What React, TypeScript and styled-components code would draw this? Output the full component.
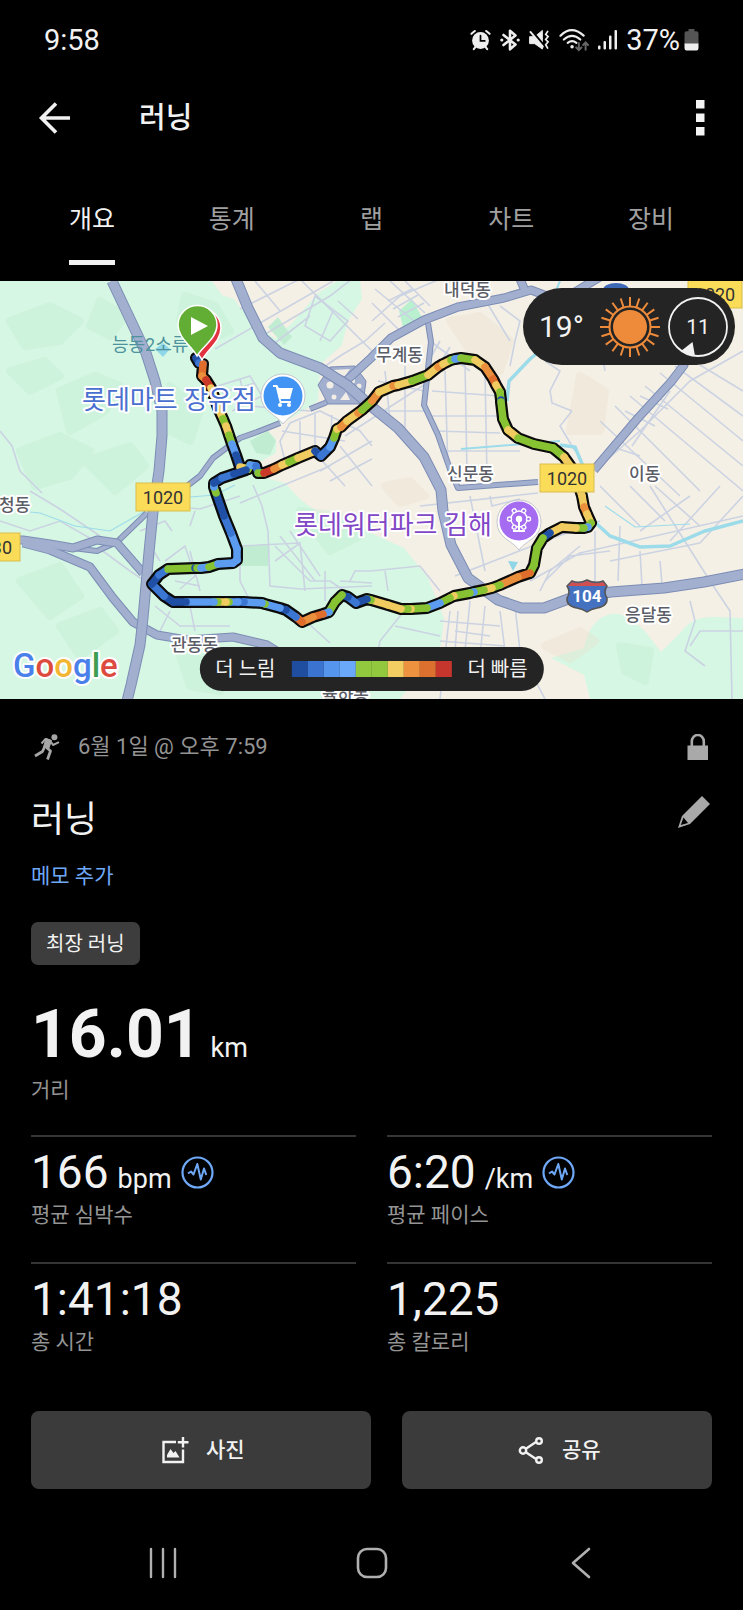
import React from "react";
import styled, { createGlobalStyle } from "styled-components";

const FONT = `Roboto, "Noto Sans CJK KR", sans-serif`;

const GlobalStyle = createGlobalStyle`
  * { box-sizing: border-box; }
  body { margin: 0; background: #000; color: #f2f2f2; font-family: ${FONT}; }
  button { font: inherit; color: inherit; background: none; border: 0; padding: 0; cursor: pointer; }
  svg { display: block; }
`;

const Screen = styled.div`
  display: flex;
  flex-direction: column;
  min-height: 100vh;
`;

/* ---------- top bars ---------- */

const StatusBar = styled.header`
  display: flex;
  align-items: center;
  justify-content: space-between;
  height: 80px;
  padding: 0 44px;
  font-size: 29px;
  line-height: 32px;
`;

const StatusIcons = styled.div`
  display: flex;
  align-items: center;
  gap: 9px;
`;

const BatteryGroup = styled.div`
  display: flex;
  align-items: center;
  gap: 4px;
`;

const AppBar = styled.div`
  display: flex;
  align-items: center;
  height: 76px;
  padding: 0 38px;
`;

const AppTitle = styled.h1`
  flex: 1;
  margin: 0 0 0 67px;
  font-size: 29px;
  line-height: 36px;
  font-weight: 500;
`;

const TabBar = styled.nav`
  display: grid;
  grid-template-columns: repeat(5, 1fr);
  height: 125px;
  padding: 0 22px 16px;
`;

const Tab = styled.button<{ $active?: boolean }>`
  justify-self: center;
  display: flex;
  align-items: flex-end;
  padding-bottom: 24px;
  border-bottom: 5px solid ${(p) => (p.$active ? "#f2f2f2" : "transparent")};
  color: ${(p) => (p.$active ? "#f2f2f2" : "#a0a0a0")};
  font-size: 25px;
  line-height: 32px;
`;

/* ---------- map ---------- */

const MapPanel = styled.section`
  position: relative;
  overflow: hidden;

  > svg {
    width: 100%;
    height: auto;
  }
`;

const WeatherPill = styled.div`
  position: absolute;
  top: 7px;
  right: 8px;
  display: flex;
  align-items: center;
  height: 77px;
  padding: 0 7px 0 16px;
  gap: 8px;
  border-radius: 39px;
  background: #242424;
`;

const Temperature = styled.span`
  width: 53px;
  font-size: 30px;
  line-height: 36px;
`;

const Legend = styled.div`
  position: absolute;
  bottom: 8px;
  left: 50%;
  transform: translateX(-50%);
  display: flex;
  align-items: center;
  gap: 16px;
  height: 44px;
  padding: 0 16px;
  border-radius: 22px;
  background: #242424;
  font-size: 20px;
  line-height: 28px;
  white-space: nowrap;
`;

const Scale = styled.div`
  display: flex;
`;

const Swatch = styled.span<{ $color: string }>`
  width: 16px;
  height: 16px;
  background: ${(p) => p.$color};
`;

/* ---------- activity details ---------- */

const Details = styled.main`
  display: flex;
  flex-direction: column;
  align-items: stretch;
  padding: 32px 31px 0;
`;

const MetaRow = styled.div`
  display: flex;
  align-items: center;
  height: 32px;
  color: #949494;
  font-size: 22px;
  line-height: 32px;
`;

const MetaText = styled.span`
  flex: 1;
  margin-left: 15px;
`;

const TitleRow = styled.div`
  display: flex;
  align-items: flex-start;
  justify-content: space-between;
  margin-top: 33px;
`;

const ActivityTitle = styled.h2`
  margin: 0;
  font-size: 36px;
  line-height: 48px;
  font-weight: 400;
`;

const EditButton = styled.button`
  height: 32px;
  margin-right: 2px;
  color: #a9a9a9;
`;

const NoteLink = styled.a`
  align-self: flex-start;
  margin-top: 18px;
  color: #6ea8f7;
  font-size: 21px;
  line-height: 28px;
  text-decoration: none;
`;

const Badge = styled.span`
  align-self: flex-start;
  margin-top: 32px;
  padding: 8px 15px 7px;
  border-radius: 7px;
  background: #3d3d3d;
  font-size: 20px;
  line-height: 28px;
`;

const Primary = styled.div`
  margin: 34px 0 31px;
`;

const PrimaryValue = styled.div`
  display: flex;
  align-items: baseline;
  gap: 9px;
  font-size: 66px;
  line-height: 72px;
  font-weight: 700;
`;

const Unit = styled.span`
  font-size: 27px;
  line-height: 32px;
  font-weight: 400;
`;

const Label = styled.div<{ $gap?: number }>`
  margin-top: ${(p) => p.$gap ?? 1}px;
  color: #949494;
  font-size: 21px;
  line-height: 28px;
`;

const StatGrid = styled.div`
  display: grid;
  grid-template-columns: 1fr 1fr;
  gap: 33px 31px;
`;

const Stat = styled.div`
  border-top: 2px solid #353535;
  padding-top: 7px;
`;

const StatLine = styled.div`
  display: flex;
  align-items: center;
  gap: 9px;
`;

const StatValue = styled.div`
  display: flex;
  align-items: baseline;
  gap: 9px;
  font-size: 46px;
  line-height: 56px;
`;

const Actions = styled.div`
  display: grid;
  grid-template-columns: 11fr 10fr;
  gap: 31px;
  margin-top: 55px;
`;

const ActionButton = styled.button`
  display: flex;
  align-items: center;
  justify-content: center;
  gap: 17px;
  height: 78px;
  padding-left: 4px;
  border-radius: 8px;
  background: #3b3b3b;
  font-size: 21px;
  line-height: 28px;
  font-weight: 500;
`;

const NavBar = styled.nav`
  display: grid;
  grid-template-columns: repeat(3, 1fr);
  justify-items: center;
  align-items: center;
  height: 64px;
  margin: 42px 58px 15px;
  color: #b0b0b0;
`;

/* ---------- icons ---------- */

const AlarmIcon = () => (
  <svg width="21" height="22" viewBox="0 0 22 22" fill="none" stroke="#eee" strokeWidth="2.2" strokeLinecap="round">
    <circle cx="11" cy="11.5" r="8.8" fill="#eee" stroke="none" />
    <path d="M1.5 4.5 5 1.6M20.500 4.500 17 1.600M4 20.500 6 18M18 20.500 16 18" />
    <path d="M11 6.500V12H15.500" stroke="#000" strokeWidth="1.800" />
  </svg>
);

const BluetoothIcon = () => (
  <svg width="20" height="22" viewBox="0 0 20 22" fill="none" stroke="#eee" strokeWidth="2.600" strokeLinejoin="round" strokeLinecap="round">
    <path d="M3.500 6 15.500 15.500 10 20.300V1.700L15.500 6.500 3.500 16" />
    <circle cx="1.800" cy="11" r="1.600" fill="#eee" stroke="none" />
    <circle cx="18.200" cy="11" r="1.600" fill="#eee" stroke="none" />
  </svg>
);

const MuteIcon = () => (
  <svg width="21" height="22" viewBox="0 0 22 22" fill="none" stroke="#eee" strokeLinecap="round">
    <path d="M1 7.500H6L14 1V20.500L6 14.800H1Z" fill="#eee" stroke="#eee" strokeWidth="1" />
    <path d="M3.500 2 15 16" stroke="#000" strokeWidth="2.500" />
    <path d="M1.500 2.500 14.500 18" strokeWidth="2" />
    <path d="M19.500 2l-2 3 2.500 2.500-2.500 3 2.500 2.500-2.500 3 2 3.500" strokeWidth="1.800" />
  </svg>
);

const WifiIcon = () => (
  <svg width="30" height="24" viewBox="0 0 31 24" fill="none" stroke="#eee" strokeWidth="2.2" strokeLinecap="round">
    <path d="M1.500 7.500Q13 -4 25.500 7.500M5 11.500Q13.500 4 22 11.500M9 15Q13.500 11.500 18 15" />
    <circle cx="13.500" cy="19" r="1.800" fill="#eee" stroke="none" />
    <path d="M20.500 15v7.500m-2.700-2.700 2.700 2.700 2.700-2.700M27.500 22V14.500m-2.500 2.700 2.500-2.700 2.500 2.700" stroke="#666" strokeWidth="2" />
  </svg>
);

const SignalIcon = () => (
  <svg width="19" height="22" viewBox="0 0 19 22" fill="#eee">
    <rect x="0" y="16.500" width="2.500" height="4" rx="1" />
    <rect x="5.500" y="12" width="2.500" height="8.500" rx="1" />
    <rect x="11" y="6.500" width="2.500" height="14" rx="1" />
    <rect x="16.500" y="1" width="2.500" height="19.500" rx="1" />
  </svg>
);

const BatteryIcon = () => (
  <svg width="15" height="22" viewBox="0 0 15 22">
    <path d="M4.500 0H10.500V2.200H12.500Q14.500 2.200 14.500 4.500V15H.5V4.500Q.5 2.200 2.500 2.200H4.500Z" fill="#555" />
    <path d="M.5 14.500H14.500V19Q14.500 21.500 12.500 21.500H2.500Q.5 21.500 .5 19Z" fill="#eee" />
  </svg>
);

const BackIcon = () => (
  <svg width="34" height="34" viewBox="0 0 34 34" fill="none" stroke="#f2f2f2" strokeWidth="3.600">
    <path d="M32 17H4M18 2.500 3.500 17 18 31.500" />
  </svg>
);

const MoreIcon = () => (
  <svg width="9" height="36" viewBox="0 0 9 36" fill="#f4f4f4">
    <rect width="8.500" height="8.500" />
    <rect y="13.500" width="8.500" height="8.500" />
    <rect y="27" width="8.500" height="8.500" />
  </svg>
);

const RunnerIcon = () => (
  <svg width="32" height="28" viewBox="0 0 32 28" fill="none" stroke="#a6a6a6" strokeLinejoin="round">
    <circle cx="23.400" cy="4.200" r="3" fill="#a6a6a6" stroke="none" />
    <path d="M15 5.500 20.500 7.500 18 15 12.500 14Z" fill="#a6a6a6" strokeWidth="1" />
    <path d="M10.500 10.500 14.500 6 19 7.500 22 12 28 9.200" strokeWidth="2" />
    <path d="M13.800 13.500 11.500 18.500 4 23M15.500 14.500 19.500 18 16.500 26.500" strokeWidth="2.800" />
  </svg>
);

const LockIcon = () => (
  <svg width="29" height="26" viewBox="0 0 29 26" fill="none">
    <path d="M8.800 13V7.500a6 6.500 0 0 1 12 0V13" stroke="#a9a9a9" strokeWidth="2.600" />
    <rect x="4.500" y="11.500" width="20.500" height="14.500" fill="#a9a9a9" />
  </svg>
);

const PencilIcon = () => (
  <svg width="32" height="32" viewBox="0 0 32 32" fill="currentColor">
    <path fillRule="evenodd" d="M24 0 32 8 12 28 0 32 4 20ZM5.500 21.500 2.800 29 10 27Z" />
  </svg>
);

const PulseIcon = () => (
  <svg width="33" height="33" viewBox="0 0 33 33" fill="none" stroke="#6ea8f7">
    <circle cx="16.500" cy="16.500" r="15" strokeWidth="2.200" />
    <path d="M7 17.500 10 15.500 12.500 18.500 16.300 8 19.800 23.500 23 12.500 25.300 19" strokeWidth="2" strokeLinejoin="round" />
  </svg>
);

const PhotoIcon = () => (
  <svg width="27" height="27" viewBox="0 0 27 27" fill="none" stroke="#f2f2f2" strokeWidth="2.400">
    <path d="M14 5H1.500V25H21V12.500" />
    <path d="M21 0V10.500M15.800 5.200H26.500" />
    <path d="M5 20.500V18L8.500 12 11.500 16 13.500 14 17.500 20.500Z" fill="#f2f2f2" stroke="none" />
  </svg>
);

const ShareIcon = () => (
  <svg width="27" height="27" viewBox="0 0 27 27" fill="none" stroke="#f2f2f2" strokeWidth="2.400">
    <path d="M7.500 12 18 5M7.500 15 18 22" />
    <circle cx="5" cy="13.500" r="3.200" />
    <circle cx="21" cy="4" r="2.800" />
    <circle cx="21" cy="23" r="2.800" />
  </svg>
);

const SunIcon = () => (
  <svg width="60" height="60" viewBox="-30 -30 60 60" stroke="#ee8b3b" strokeWidth="2">
    {Array.from({ length: 20 }, (_, i) => (
      <line key={i} x1="0" y1="-20" x2="0" y2="-30" transform={`rotate(${i * 18})`} />
    ))}
    <circle r="20.500" fill="none" />
    <circle r="17" fill="#ee8b3b" stroke="none" />
  </svg>
);

const WindIcon = () => (
  <svg width="60" height="60" viewBox="-30 -30 60 60">
    <circle r="29" fill="none" stroke="#f2f2f2" strokeWidth="1.800" />
    <path d="M-5.500 15 -17 24Q-10 29 -3 29Z" fill="#f2f2f2" />
    <text y="7" fontSize="21" textAnchor="middle" fill="#f2f2f2">11</text>
  </svg>
);

/* ---------- map drawing ---------- */

const DB = "#1f50a5";
const MB = "#3a76d2";
const LB = "#5b9bf0";
const G = "#86c232";
const Y = "#f0cc60";
const O = "#ea8f3c";
const D = "#df6d2c";
const R = "#cb3a28";

/* Each entry is a track point and the pace colour of the stretch that leaves it. */
const track: [number, number, string][] = [
  [196, 77, DB], [199, 82, MB], [203, 83, D], [202, 95, O], [206, 99, R], [211, 107, Y],
  [218, 127, Y], [223, 138, G], [226, 145, Y], [229, 154, G], [232, 163, LB], [236, 174, DB],
  [240, 186, Y], [248, 188, G], [250, 184, LB], [256, 185, MB], [258, 192, G], [264, 192, R],
  [274, 188, O], [282, 184, Y], [289, 181, G], [298, 177, Y], [315, 170, DB], [321, 175, MB],
  [330, 166, LB], [334, 157, G], [337, 148, Y], [341, 146, O], [347, 140, Y], [358, 132, O],
  [362, 129, G], [372, 120, O], [379, 111, Y], [393, 105, O], [398, 104, Y], [412, 100, G],
  [428, 94, Y], [438, 86, O], [443, 83, Y], [451, 79, G], [455, 78, LB], [461, 77, G],
  [475, 79, Y], [485, 86, O], [493, 98, D], [496, 104, Y], [500, 111, G], [501, 119, DB],
  [501, 121, G], [503, 138, G], [508, 149, Y], [518, 157, G], [534, 163, G], [553, 167, G],
  [564, 176, Y], [574, 190, Y], [582, 215, Y], [584, 226, O], [587, 233, Y], [591, 242, G],
  [588, 246, LB], [584, 247, G], [576, 247, Y], [562, 246, Y], [550, 252, DB], [543, 257, G],
  [537, 267, G], [534, 284, G], [530, 292, D], [518, 296, O], [500, 304, G], [492, 307, Y],
  [484, 309, G], [474, 311, LB], [470, 312, G], [454, 315, Y], [450, 317, G], [440, 322, LB],
  [427, 327, G], [411, 328, Y], [408, 328, G], [401, 328, Y], [388, 324, Y], [371, 319, G],
  [367, 318, DB], [356, 322, MB], [348, 316, DB], [342, 314, G], [335, 321, G], [329, 331, LB],
  [323, 333, D], [313, 336, O], [302, 341, D], [296, 336, MB], [286, 329, DB], [280, 327, LB],
  [265, 323, G], [262, 322, LB], [244, 321, MB], [238, 321, LB], [229, 321, G], [226, 321, Y],
  [218, 321, G], [214, 321, LB], [186, 321, DB], [173, 321, DB], [164, 315, MB], [152, 303, DB],
  [159, 294, MB], [168, 288, G], [195, 287, DB], [197, 287, G], [201, 287, LB], [209, 286, G],
  [218, 283, LB], [233, 282, LB], [237, 279, LB], [237, 268, LB], [231, 252, MB], [224, 235, DB],
  [216, 212, G], [214, 206, LB], [214, 202, DB], [222, 197, MB], [234, 193, DB], [246, 189, DB],
];

const trackLine = track.map(([x, y]) => `${x},${y}`).join(" ");

const majorRoads = [
  "M112 0 130 38 146 72 155 100 162 130 162 155 159 190 153 231 149 271 143 337 140 364 131 404 127 420",
  "M236 -2 248 27 263 57 280 72 320 87 347 104 372 126 398 147 424 176 441 209 443 230 451 264 468 297 498 319 521 327 544 327 571 317 611 311 664 307 704 301 745 293",
];

const mediumRoads = [
  "M345 101 371 77 391 57 424 39 458 26 504 17 531 9 560 20 600 -4",
  "M-2 259 23 259 50 263 73 267 97 259 117 262 143 292",
  "M23 262 50 269 90 286 113 317 133 341 157 354 187 359 233 356 267 364 280 372",
  "M520 -2 526 12",
  "M594 189 638 137 671 101 684 84 684 60",
];

const smallRoads = [
  "M343 107 325 122 310 128M280 142 257 151 240 157 225 168 213 177 200 195 187 205",
  "M147 232 117 261 97 270 73 267",
  "M428 42 431 61 424 124 438 154 451 191 458 207 538 201",
];

const streets = [
  "M333 0 215 68M318 90 340 75 365 60 385 42M262 55 330 15 352 -2M300 -2 372 70M275 62 310 35",
  "M315 15 348 40 330 60 305 45ZM333 30 320 60M338 20 358 38M240 28 300 -2M280 30 255 0",
  "M372 40 400 15 440 -2M375 8 420 45M390 0 425 32M372 22 400 50M405 0 430 25",
  "M388 20 412 8M393 28 418 14M398 36 424 22M430 60 470 90M440 60 426 85M450 66 432 95",
  "M218 105 250 95 262 115 232 130M222 112 255 102M240 98 246 122M250 125 310 130",
  "M285 180 280 160 290 142 320 130 360 150 372 165M300 175 300 140M315 170 315 133M330 165 332 134M282 150 345 160",
  "M320 190 372 160M330 200 372 178M340 165 372 205M345 155 430 100M315 172 345 205",
  "M378 100 424 110M380 130 424 130M385 90 390 140M405 85 405 150M432 110 500 115M430 135 502 135M445 90 448 190M465 80 467 195M485 90 487 195",
  "M435 150 500 152M440 170 520 170M500 25 520 40 515 60 510 85M480 10 510 60M545 70 600 60 605 90",
  "M545 80 560 90 550 110 552 122 572 130M572 130 560 145 575 170M600 185 640 150 690 100 743 70",
  "M600 140 680 215M615 125 700 210M630 115 743 210M645 105 743 185M660 92 743 160M675 85 743 135M700 84 743 110",
  "M610 165 640 175M620 155 655 120M632 165 670 110M625 130 655 145M640 115 668 128",
  "M600 205 640 245M630 205 665 240M655 205 700 245M690 215 640 250M720 205 670 260M743 215 700 262",
  "M420 225 538 212M455 295 545 260 600 240M530 300 580 272 743 235M545 300 570 275 610 270M540 310 550 290 580 265",
  "M650 205 710 300 730 330 732 418M690 320 695 340 685 370 705 385M743 350 700 350 690 365",
  "M470 215 485 290M490 215 492 225 520 218M595 250 595 310M620 245 618 300M640 270 642 305M660 280 662 303M610 280 700 262",
  "M515 325 520 370 545 418M450 330 440 418M470 320 462 400M485 325 480 375M500 330 505 370M440 340 500 345M440 360 505 365",
  "M455 350 490 355M452 370 490 375M458 330 455 370M404 330 380 360 372 400M371 290 420 285 440 310M385 290 388 310",
  "M380 370 440 380M395 345 440 355M240 222 330 185M253 204 262 225 268 250 270 305 300 308 372 305",
  "M240 265 300 262M250 320 240 300 240 270M275 265 310 300M280 255 315 300M290 250 320 295M275 280 300 262 305 310",
  "M300 335 330 362M345 310 330 300 310 300M350 300 355 290 371 290M325 320 325 290M340 300 372 302",
  "M150 205 170 225 200 228 240 215M190 245 195 230M165 280 185 265 195 295 180 308M175 300 200 305M190 270 200 310",
  "M0 240 30 250 60 240 95 260M30 210 60 228 100 255M0 150 12 165 20 190 42 212",
  "M100 268 130 290 145 300M150 265 160 280M140 250 165 240 172 250M155 325 180 345 230 345M170 330 160 350M190 325 195 350",
];

const hills = [
  "M10 40 50 25 80 40 60 60 25 65Z",
  "M60 110 95 95 120 105 105 130 70 150Z",
  "M20 170 60 155 90 170 70 195 35 205Z",
  "M100 20 125 35 110 55 90 45Z",
  "M85 180 130 165 145 185 115 210Z",
  "M185 15 215 25 230 50 205 60 180 40Z",
  "M20 300 60 285 80 315 50 335Z",
  "M60 345 100 330 115 350 80 375Z",
  "M170 105 200 130 190 160 170 150Z",
  "M180 375 230 385 220 410 190 405Z",
  "M300 230 340 235 360 255 330 270Z",
  "M620 365 650 370 645 400 625 390Z",
  "M10 90 45 80 60 95 30 110Z",
];

const places: [string, number, number][] = [
  ["내덕동", 444, 15],
  ["무계동", 376, 80],
  ["신문동", 447, 199],
  ["이동", 629, 199],
  ["응달동", 625, 340],
  ["관동동", 171, 370],
  ["청동", -1, 230],
  ["율하동", 322, 420],
];

const shields: [string, number, number][] = [
  ["1020", 136, 202],
  ["1020", 540, 183],
  ["1020", 688, -1],
  ["30", -34, 252],
];

const Halo = styled.text<{ $size: number; $fill: string; $weight?: number }>`
  font-size: ${(p) => p.$size}px;
  font-weight: ${(p) => p.$weight ?? 500};
  fill: ${(p) => p.$fill};
  stroke: #fff;
  stroke-width: 4px;
  stroke-linejoin: round;
  paint-order: stroke;
`;

const Roads = ({ paths, width }: { paths: string[]; width: number }) => (
  <g fill="none" strokeLinejoin="round">
    {paths.map((d) => <path key={d} d={d} stroke="#7c8db5" strokeWidth={width} />)}
    {paths.map((d) => <path key={d + "i"} d={d} stroke="#a2afcf" strokeWidth={width - 2} />)}
  </g>
);

const RouteMap = () => (
  <svg viewBox="0 0 743 418" role="img" aria-label="러닝 경로 지도">
    <rect width="743" height="418" fill="#f5f0e5" />
    <g fill="#d6f7e3">
      <path d="M0 0H212L222 14 234 18 240 26 255 40 275 58 292 42 318 12 340 -2H360L362 18 348 40 342 64 320 84 318 120 300 132 282 142 268 150 276 158 276 172 262 180 250 182 262 196 285 202 300 218 318 232 345 238 371 252 404 267 428 297 444 337 441 364 420 390 400 418H0Z" />
      <path d="M399 30 412 18 424 40 404 50Z" fill="#b9f0cf" />
      <path d="M551 377 584 367 Q590 338 610 333 628 330 648 354L661 371 681 351Q692 335 715 336L743 337V418H590L584 394Z" />
    </g>
    <g fill="#bdebd0" opacity="0.300" stroke="#bdebd0" strokeWidth="8" strokeLinejoin="round">
      {hills.map((d) => <path key={d} d={d} />)}
    </g>
    <g fill="#c0ecd1">
      <path d="M240 264H268V285H240ZM268 46 278 36 292 56 284 64ZM250 160 268 150 276 160 270 174 256 172Z" />
    </g>
    <g fill="#eadfce" opacity="0.350" stroke="#eadfce" strokeWidth="8" strokeLinejoin="round">
      <path d="M450 40 480 35 510 60 500 90 470 70Z" />
      <path d="M580 95 605 110 600 150 570 150Z" />
      <path d="M545 365 580 350 595 360 570 378Z" />
      <path d="M385 205 410 200 425 215 400 222Z" />
    </g>
    <g fill="none" stroke="#cbd3e3" strokeWidth="1.600">
      {streets.map((d) => <path key={d} d={d} />)}
    </g>
    <g fill="none" stroke="#9cdcea" strokeWidth="3.500">
      <path d="M552 60 530 78 509 100 507 120" />
      <path d="M560 164 575 166 583 185 588 235 610 255 640 266 670 265 705 250 743 240" />
      <path d="M461 168 560 160M560 0 555 12" strokeWidth="2" />
      <path d="M0 228 40 232 75 245 110 250 145 230M190 216 215 214 235 204M605 225 635 246 690 243" strokeWidth="1.200" />
    </g>
    <path d="M508 280 518 281 513 290Z" fill="#8fd6e8" />
    <path d="M155 68 163 62 170 68 163 76Z" fill="#8fd6e8" />
    <Roads paths={smallRoads} width={6} />
    <path d="M330 86 355 85 366 100 363 123 328 123 318 104Z" fill="#a2afcf" stroke="#7c8db5" />
    <g fill="#f2eee6">
      <circle cx="330" cy="104" r="3.500" />
      <circle cx="334" cy="116" r="2.500" />
      <circle cx="352" cy="100" r="3" />
      <circle cx="359" cy="105" r="2.500" />
      <path d="M333 89 350 88 345 95 340 94ZM340 119 346 111 350 119Z" />
    </g>
    <Roads paths={mediumRoads} width={9} />
    <Roads paths={majorRoads} width={11} />

    <polyline points={trackLine} fill="none" stroke="#0b0b0b" strokeWidth="12" strokeLinejoin="round" strokeLinecap="round" />
    {track.slice(0, -1).map(([x, y, color], i) => (
      <line key={i} x1={x} y1={y} x2={track[i + 1][0]} y2={track[i + 1][1]} stroke={color} strokeWidth="7.500" strokeLinecap="round" />
    ))}

    {places.map(([name, x, y]) => (
      <Halo key={name} x={x} y={y} $size={17} $fill="#5b5d66">{name}</Halo>
    ))}
    <text x="112" y="70" fontSize="18" fill="#4d929c">능동2소류</text>
    <Halo x="82" y="128" $size={26} $fill="#4a70cf" $weight={400}>롯데마트 장유점</Halo>
    <Halo x="294" y="253" $size={26} $fill="#8247c6" $weight={400}>롯데워터파크 김해</Halo>

    <g stroke="#fff" strokeWidth="1.500">
      <path d="M202 79C197 69 183 60 183 47A19 19 0 0 1 221 47C221 60 208 68 202 79Z" fill="#e0333f" />
      <path d="M197 75C192 65 178 57 178 44A19.500 19.500 0 0 1 217 44C217 57 203 65 197 75Z" fill="#62ad33" />
    </g>
    <path d="M191 36 208 45 191 54Z" fill="#fff" />

    <g fill="#fff" stroke="#b9b9c4" strokeWidth="0.800">
      <path d="M283 143C277 134 261 130 261 115A22 22 0 0 1 305 115C305 130 289 134 283 143Z" />
      <path d="M519 269C513 260 497 257 497 241A22 22 0 0 1 541 241C541 257 525 260 519 269Z" />
    </g>
    <circle cx="283" cy="115" r="19.500" fill="#4194f4" />
    <path d="M273 104H277L279 107H293L290 118H279L277 105" fill="#fff" />
    <path d="M273 105H276.500L280.500 121H291" fill="none" stroke="#fff" strokeWidth="1.800" />
    <circle cx="280" cy="124" r="2" fill="#fff" />
    <circle cx="289" cy="124" r="2" fill="#fff" />
    <circle cx="519" cy="240" r="19.500" fill="#a56bf0" />
    <g fill="none" stroke="#fff" strokeWidth="1.400">
      <circle cx="519" cy="238" r="8" />
      <circle cx="519" cy="238" r="2.500" fill="#fff" />
      <path d="M519 238V250M513 250H525" strokeWidth="2" />
      {[0, 60, 120, 180, 240, 300].map((a) => (
        <circle key={a} cx="528.500" cy="238" r="2" fill="#a56bf0" transform={`rotate(${a} 519 238)`} />
      ))}
    </g>

    {shields.map(([name, x, y]) => (
      <g key={`${name}${x}`}>
        <rect x={x} y={y} width="54" height="28" fill="#fadc58" stroke="#d9bd4c" />
        <text x={name === "30" ? 12 : x + 27} y={y + 21} fontSize="18" textAnchor={name === "30" ? "end" : "middle"} fill="#333">{name}</text>
      </g>
    ))}
    <ellipse cx="616" cy="9" rx="13" ry="7" fill="#3c67b5" />
    <path d="M572 300Q579 303 587 299 595 303 603 300L607 305Q603 311 607 317 608 325 597 327 591 328 587 331 583 328 577 327 566 325 567 317 571 311 567 305Z" fill="#4472c0" stroke="#555" strokeWidth="1.500" />
    <path d="M572 301Q579 304 587 300 595 304 603 301L606 305H568Z" fill="#d05050" />
    <text x="587" y="321" fontSize="17" fontWeight="700" textAnchor="middle" fill="#fff">104</text>

    <Halo x="13" y="396" $size={33} $fill="#4a80ea">
      G<tspan fill="#dd4b3e">o</tspan><tspan fill="#f2b632">o</tspan><tspan fill="#4a80ea">g</tspan><tspan fill="#3f9d50">l</tspan><tspan fill="#dd4b3e">e</tspan>
    </Halo>
  </svg>
);

/* ---------- screen ---------- */

const tabs = ["개요", "통계", "랩", "차트", "장비"];

const paceColors = ["#1f4ea1", "#3a73d0", "#5595ed", "#6aa8fa", "#92c83e", "#92c83e", "#f3cd62", "#ed923f", "#dc712f", "#c6362c"];

const stats = [
  { value: "166", unit: "bpm", label: "평균 심박수" },
  { value: "6:20", unit: "/km", label: "평균 페이스" },
  { value: "1:41:18", label: "총 시간" },
  { value: "1,225", label: "총 칼로리" },
];

export default function App() {
  return (
    <Screen>
      <GlobalStyle />
      <StatusBar>
        <span>9:58</span>
        <StatusIcons>
          <AlarmIcon />
          <BluetoothIcon />
          <MuteIcon />
          <WifiIcon />
          <SignalIcon />
          <BatteryGroup>
            37%
            <BatteryIcon />
          </BatteryGroup>
        </StatusIcons>
      </StatusBar>
      <AppBar>
        <button type="button" aria-label="뒤로"><BackIcon /></button>
        <AppTitle>러닝</AppTitle>
        <button type="button" aria-label="더보기"><MoreIcon /></button>
      </AppBar>
      <TabBar>
        {tabs.map((tab, i) => (
          <Tab key={tab} type="button" $active={i === 0}>{tab}</Tab>
        ))}
      </TabBar>

      <MapPanel>
        <RouteMap />
        <WeatherPill>
          <Temperature>19°</Temperature>
          <SunIcon />
          <WindIcon />
        </WeatherPill>
        <Legend>
          <span>더 느림</span>
          <Scale>
            {paceColors.map((color, i) => <Swatch key={i} $color={color} />)}
          </Scale>
          <span>더 빠름</span>
        </Legend>
      </MapPanel>

      <Details>
        <MetaRow>
          <RunnerIcon />
          <MetaText>6월 1일 @ 오후 7:59</MetaText>
          <LockIcon />
        </MetaRow>
        <TitleRow>
          <ActivityTitle>러닝</ActivityTitle>
          <EditButton type="button" aria-label="제목 편집"><PencilIcon /></EditButton>
        </TitleRow>
        <NoteLink href="#note">메모 추가</NoteLink>
        <Badge>최장 러닝</Badge>
        <Primary>
          <PrimaryValue>16.01<Unit>km</Unit></PrimaryValue>
          <Label $gap={5}>거리</Label>
        </Primary>
        <StatGrid>
          {stats.map((s) => (
            <Stat key={s.label}>
              <StatLine>
                <StatValue>
                  {s.value}
                  {s.unit && <Unit>{s.unit}</Unit>}
                </StatValue>
                {s.unit && <PulseIcon />}
              </StatLine>
              <Label>{s.label}</Label>
            </Stat>
          ))}
        </StatGrid>
        <Actions>
          <ActionButton type="button"><PhotoIcon />사진</ActionButton>
          <ActionButton type="button"><ShareIcon />공유</ActionButton>
        </Actions>
      </Details>

      <NavBar>
        <button type="button" aria-label="최근 앱">
          <svg width="32" height="32" viewBox="0 0 32 32" stroke="currentColor" strokeWidth="2.400" strokeLinecap="round">
            <path d="M4 2V30M16 2V30M28 2V30" />
          </svg>
        </button>
        <button type="button" aria-label="홈">
          <svg width="32" height="32" viewBox="0 0 32 32" fill="none" stroke="currentColor" strokeWidth="2.600">
            <rect x="2" y="2" width="28" height="28" rx="9" />
          </svg>
        </button>
        <button type="button" aria-label="이전 화면">
          <svg width="32" height="32" viewBox="0 0 32 32" fill="none" stroke="currentColor" strokeWidth="2.600" strokeLinecap="round" strokeLinejoin="round">
            <path d="M24 2 8 16 24 30" />
          </svg>
        </button>
      </NavBar>
    </Screen>
  );
}
